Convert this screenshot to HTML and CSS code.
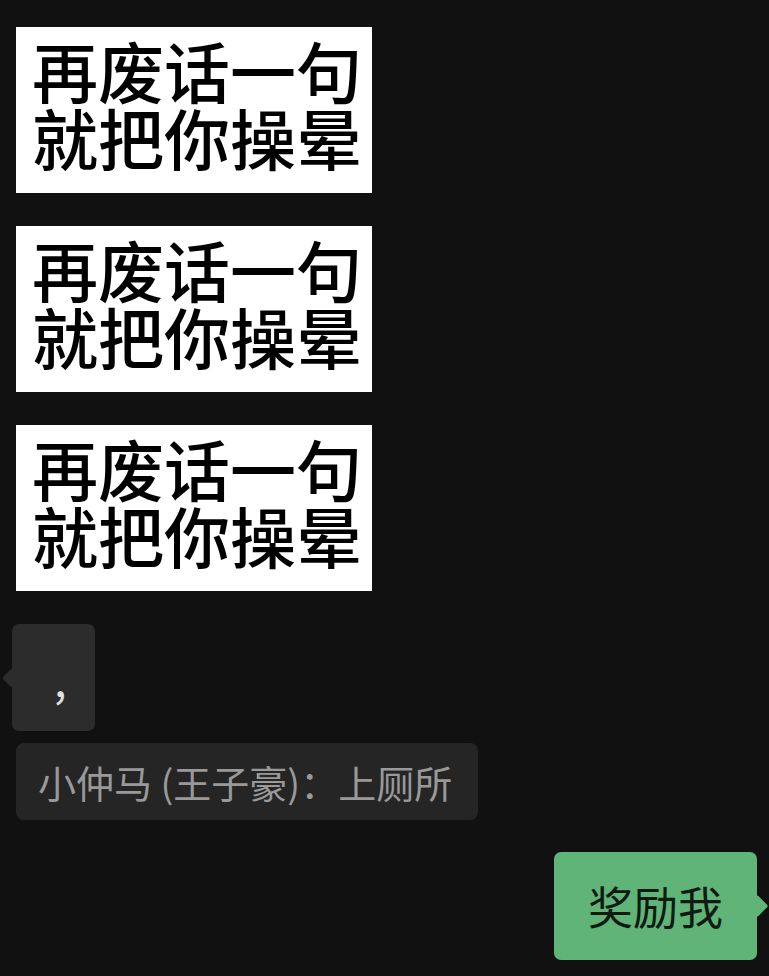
FILE: index.html
```html
<!DOCTYPE html>
<html lang="zh-CN">
<head>
    <meta charset="UTF-8">
    <meta name="viewport" content="width=device-width, initial-scale=1.0">
    <title>Chat</title>
    <link rel="stylesheet" href="styles.css">
</head>
<body>
    <div class="chat">
        <div class="sticker">再废话一句<br>就把你操晕</div>
        <div class="sticker">再废话一句<br>就把你操晕</div>
        <div class="sticker">再废话一句<br>就把你操晕</div>

        <div class="bubble left">,</div>

        <div class="quote">小仲马 (王子豪)：上厕所</div>

        <div class="row-right">
            <div class="bubble right">奖励我</div>
        </div>
    </div>
</body>
</html>
```

FILE: styles.css
```css
body {
    margin: 0;
    background-color: #111111;
    font-family: "Noto Sans CJK SC", "Noto Sans", sans-serif;
}
.chat {
    display: flex;
    flex-direction: column;
    align-items: flex-start;
    padding: 27px 12px 16px 16px;
}
.sticker {
    width: 356px;
    height: 166px;
    box-sizing: border-box;
    background-color: #ffffff;
    color: #000000;
    font-weight: 500;
    font-size: 66px;
    line-height: 67px;
    padding: 9px 0 0 16px;
    margin-bottom: 33px;
    white-space: nowrap;
}
.bubble {
    position: relative;
    height: 107px;
    box-sizing: border-box;
    border-radius: 7px;
    font-size: 45px;
    line-height: 107px;
}
.bubble::before {
    content: "";
    position: absolute;
    top: 50%;
    width: 14px;
    height: 14px;
    border-radius: 2px;
    transform: translateY(-50%) rotate(45deg);
}
.bubble.left {
    margin-left: -4px;
    width: 83px;
    padding-left: 42px;
    background-color: #2c2c2c;
    color: #e0e0e0;
}
.bubble.left::before {
    left: -7px;
    background-color: #2c2c2c;
}
.quote {
    margin-top: 12px;
    background-color: #252525;
    color: #999999;
    font-size: 38px;
    line-height: 77px;
    height: 77px;
    padding: 0 26px 0 22px;
    border-radius: 8px;
    white-space: nowrap;
}
.row-right {
    align-self: stretch;
    display: flex;
    justify-content: flex-end;
    margin-top: 32px;
}
.bubble.right {
    width: 203px;
    height: 108px;
    line-height: 108px;
    text-align: center;
    background-color: #60b478;
    color: #0e1a12;
}
.bubble.right::before {
    right: -8px;
    width: 16px;
    height: 16px;
    background-color: #60b478;
}
```
